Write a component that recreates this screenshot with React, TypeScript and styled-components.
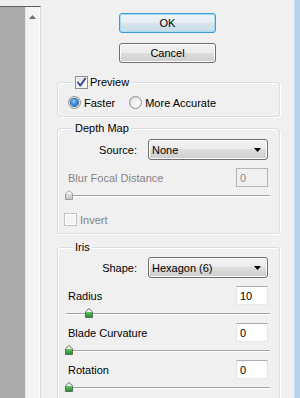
import styled, { createGlobalStyle } from 'styled-components';

const GlobalStyle = createGlobalStyle`
  *, *::before, *::after {
    box-sizing: border-box;
  }
  html, body {
    margin: 0;
    padding: 0;
    background: #f0f0f0;
  }
  body {
    font-family: 'Liberation Sans', Arial, sans-serif;
    font-size: 11px;
    color: #000;
  }
`;

const CheckMark = () => (
  <svg width="11" height="11" viewBox="0 0 11 11">
    <path
      d="M2 5.5 L4.3 8.6 L9.2 1.6"
      fill="none"
      stroke="#3b4b8c"
      strokeWidth="1.9"
      strokeLinecap="round"
      strokeLinejoin="round"
    />
  </svg>
);

const SelectArrow = () => (
  <svg width="7" height="4" viewBox="0 0 7 4">
    <path d="M0 0 H7 L3.5 4 Z" fill="#000" />
  </svg>
);

const ScrollUpArrow = () => (
  <svg width="7" height="4" viewBox="0 0 7 4">
    <path d="M3.5 0 L7 4 H0 Z" fill="#6e6e6e" />
  </svg>
);

const ThumbShape = ({ disabled }: { disabled?: boolean }) => (
  <svg width="8" height="10" viewBox="0 0 8 10">
    <defs>
      <linearGradient id="thumbOn" x1="0" y1="0" x2="0" y2="1">
        <stop offset="0" stopColor="#ffffff" />
        <stop offset="0.42" stopColor="#e8ece8" />
        <stop offset="0.43" stopColor="#5cc35f" />
        <stop offset="1" stopColor="#1d8a27" />
      </linearGradient>
      <linearGradient id="thumbOff" x1="0" y1="0" x2="0" y2="1">
        <stop offset="0" stopColor="#ffffff" />
        <stop offset="0.42" stopColor="#f2f2f2" />
        <stop offset="0.43" stopColor="#dcdcdc" />
        <stop offset="1" stopColor="#c4c4c4" />
      </linearGradient>
    </defs>
    <path
      d="M4 0.5 L7.5 3.8 V9.5 H0.5 V3.8 Z"
      fill={disabled ? 'url(#thumbOff)' : 'url(#thumbOn)'}
      stroke={disabled ? '#9c9c9c' : '#5e6f60'}
      strokeWidth="1"
    />
  </svg>
);

type SliderProps = { value: number; max: number; disabled?: boolean };

const SliderControl = ({ value, max, disabled }: SliderProps) => (
  <Slider>
    <Track />
    <Thumb style={{ left: Math.round((value / max) * 196) - 1 }}>
      <ThumbShape disabled={disabled} />
    </Thumb>
  </Slider>
);

const App = () => {
  return (
    <>
      <GlobalStyle />
      <Window>
        <LeftPane>
          <Canvas />
          <Scrollbar>
            <ScrollUpArrow />
          </Scrollbar>
        </LeftPane>

        <Main>
          <Buttons>
            <Button $primary>OK</Button>
            <Button>Cancel</Button>
          </Buttons>

          <Group $top={7}>
            <Legend>
              <CheckBox>
                <CheckMark />
              </CheckBox>
              <span>Preview</span>
            </Legend>
            <RadioRow>
              <RadioLabel>
                <Radio $checked />
                Faster
              </RadioLabel>
              <RadioLabel>
                <Radio />
                More Accurate
              </RadioLabel>
            </RadioRow>
          </Group>

          <Group $mt={5} $top={4}>
            <Legend>Depth Map</Legend>
            <FieldRow>
              <FieldLabel>Source:</FieldLabel>
              <Select>
                <span>None</span>
                <SelectArrow />
              </Select>
            </FieldRow>
            <ValueRow $disabled>
              <span>Blur Focal Distance</span>
              <NumberBox $disabled>0</NumberBox>
            </ValueRow>
            <SliderControl value={0} max={100} disabled />
            <CheckRow $disabled>
              <CheckBox $disabled />
              <span>Invert</span>
            </CheckRow>
          </Group>

          <Group $mt={7} $top={3} $bottom={20}>
            <Legend>Iris</Legend>
            <FieldRow>
              <FieldLabel>Shape:</FieldLabel>
              <Select>
                <span>Hexagon (6)</span>
                <SelectArrow />
              </Select>
            </FieldRow>
            <ValueRow>
              <span>Radius</span>
              <NumberBox>10</NumberBox>
            </ValueRow>
            <SliderControl value={10} max={100} />
            <ValueRow>
              <span>Blade Curvature</span>
              <NumberBox>0</NumberBox>
            </ValueRow>
            <SliderControl value={0} max={100} />
            <ValueRow>
              <span>Rotation</span>
              <NumberBox>0</NumberBox>
            </ValueRow>
            <SliderControl value={0} max={100} />
          </Group>
        </Main>

        <WindowEdge />
      </Window>
    </>
  );
};

export default App;

const Window = styled.div`
  width: 300px;
  height: 398px;
  display: flex;
  overflow: hidden;
  background: #f0f0f0;
`;

const LeftPane = styled.div`
  width: 41px;
  margin-top: 6px;
  display: flex;
  border-top: 1px solid #5f5f5f;
  border-right: 1px solid #dadada;
  flex-shrink: 0;
`;

const Canvas = styled.div`
  width: 25px;
  background: #ababab;
`;

const Scrollbar = styled.div`
  width: 15px;
  display: flex;
  justify-content: center;
  align-items: flex-start;
  padding-top: 8px;
  background: #f4f4f4;
  border-left: 1px solid #e6e6e6;
  border-right: 1px solid #ffffff;
`;

const Main = styled.div`
  flex: 1;
  min-width: 0;
  display: flex;
  flex-direction: column;
  padding: 13px 14px 0 16px;
`;

const WindowEdge = styled.div`
  width: 6px;
  flex-shrink: 0;
  background: linear-gradient(to right, #cbdcee 0, #cbdcee 1px, #b9d1ea 1px);
`;

const Buttons = styled.div`
  display: flex;
  flex-direction: column;
  align-items: center;
  row-gap: 10px;
  margin: 0 2px 13px 0;
`;

const Button = styled.button<{ $primary?: boolean }>`
  width: 97px;
  height: 20px;
  padding: 0;
  font-family: inherit;
  font-size: 11px;
  color: #000;
  border-radius: 3px;
  border: 1px solid ${({ $primary }) => ($primary ? '#3a9ad8' : '#707070')};
  box-shadow: inset 0 0 0 1px
    ${({ $primary }) => ($primary ? '#a6dcf6' : '#fbfbfb')};
  background: ${({ $primary }) =>
    $primary
      ? 'linear-gradient(#eef4f8 0%, #e4edf3 50%, #d6e4ed 50%, #c8dbe7 100%)'
      : 'linear-gradient(#f3f3f3 0%, #ebebeb 50%, #dddddd 50%, #cfcfcf 100%)'};
`;

const Group = styled.fieldset<{ $mt?: number; $top?: number; $bottom?: number }>`
  margin: ${({ $mt }) => $mt ?? 0}px 0 0 0;
  min-width: 0;
  padding: ${({ $top }) => $top ?? 4}px 11px ${({ $bottom }) => $bottom ?? 7}px 10px;
  border: 1px solid #d5dfe5;
  border-radius: 3px;
  box-shadow: inset 1px 1px 0 #ffffff, 1px 1px 0 #ffffff;
  display: flex;
  flex-direction: column;
  flex-shrink: 0;
`;

const Legend = styled.legend`
  height: 13px;
  line-height: 13px;
  margin-left: 5px;
  padding: 0 2px;
  display: flex;
  align-items: center;
  column-gap: 2px;
  background: #f0f0f0;
`;

const CheckBox = styled.span<{ $disabled?: boolean }>`
  width: 13px;
  height: 13px;
  display: inline-flex;
  align-items: center;
  justify-content: center;
  border: 1px solid ${({ $disabled }) => ($disabled ? '#c2c2c2' : '#8e8f8f')};
  background: ${({ $disabled }) =>
    $disabled
      ? '#f4f4f4'
      : 'linear-gradient(135deg, #d9dadb 0%, #f4f4f4 55%, #ffffff 100%)'};
  box-shadow: inset 0 0 0 1px
    ${({ $disabled }) => ($disabled ? '#ffffff' : '#f6f6f6')};
`;

const RadioRow = styled.div`
  height: 13px;
  display: flex;
  align-items: center;
  column-gap: 14px;
`;

const RadioLabel = styled.label`
  display: flex;
  align-items: center;
  column-gap: 3px;
`;

const Radio = styled.span<{ $checked?: boolean }>`
  position: relative;
  width: 13px;
  height: 13px;
  border-radius: 50%;
  border: 1px solid #8e8f8f;
  background: radial-gradient(circle at 65% 65%, #ffffff 0%, #f0f0f0 45%, #cfcfcf 100%);

  &::after {
    content: '';
    display: ${({ $checked }) => ($checked ? 'block' : 'none')};
    position: absolute;
    left: 2px;
    top: 2px;
    width: 7px;
    height: 7px;
    border-radius: 50%;
    background: radial-gradient(circle at 40% 35%, #9fd3ff 0%, #3a8ee0 45%, #1c4f96 100%);
    box-shadow: 0 0 0 1px #2b5e9f;
  }
`;

const FieldRow = styled.div`
  display: grid;
  grid-template-columns: 69px 120px;
  column-gap: 11px;
  align-items: center;
  margin-bottom: 8px;
`;

const FieldLabel = styled.span`
  text-align: right;
`;

const Select = styled.div`
  height: 21px;
  display: flex;
  align-items: center;
  justify-content: space-between;
  padding: 0 6px 0 3px;
  border: 1px solid #707070;
  border-radius: 3px;
  box-shadow: inset 0 0 0 1px #fbfbfb;
  background: linear-gradient(#f3f3f3 0%, #ebebeb 50%, #dddddd 50%, #cfcfcf 100%);
`;

const ValueRow = styled.div<{ $disabled?: boolean }>`
  height: 19px;
  display: flex;
  align-items: center;
  justify-content: space-between;
  color: ${({ $disabled }) => ($disabled ? '#858585' : '#000')};
`;

const NumberBox = styled.div<{ $disabled?: boolean }>`
  width: 32px;
  height: 19px;
  display: flex;
  align-items: center;
  padding-left: 3px;
  border: 1px solid;
  border-color: ${({ $disabled }) =>
    $disabled ? '#b5b5b5' : '#abadb3 #e2e3ea #e3e9ef #e2e3ea'};
  background: ${({ $disabled }) => ($disabled ? '#f0f0f0' : '#ffffff')};
  color: ${({ $disabled }) => ($disabled ? '#8d8d8d' : '#000')};
`;

const Slider = styled.div`
  position: relative;
  height: 18px;
  margin: 0 -2px;
  padding-top: 8px;
`;

const Track = styled.div`
  height: 2px;
  border-top: 1px solid #a2a2a2;
  border-bottom: 1px solid #ffffff;
  border-radius: 1px 0 0 1px;
`;

const Thumb = styled.div`
  position: absolute;
  top: 3px;
  width: 8px;
  height: 10px;
  line-height: 0;
`;

const CheckRow = styled.div<{ $disabled?: boolean }>`
  display: flex;
  align-items: center;
  column-gap: 3px;
  margin: 8px 0 0 -4px;
  height: 13px;
  color: ${({ $disabled }) => ($disabled ? '#858585' : '#000')};
`;
